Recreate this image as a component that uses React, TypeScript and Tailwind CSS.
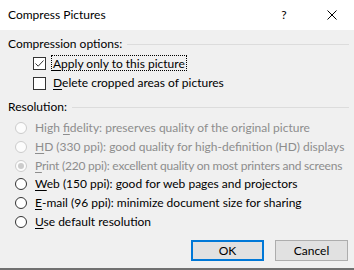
import React from 'react';

const font = { fontFamily: 'Lato, "Noto Sans", sans-serif' };

const Ul: React.FC<{ children: React.ReactNode }> = ({ children }) => (
  <span className="underline underline-offset-[2px] decoration-1">{children}</span>
);

const GroupHeader: React.FC<{ label: string; className?: string }> = ({ label, className = '' }) => (
  <div className={`flex items-center h-[16px] ${className}`}>
    <span className="text-black leading-[16px]">{label}</span>
    <div className="flex-1 ml-[5px] mr-[5px] h-px bg-[#dcdcdc]" />
  </div>
);

const Checkbox: React.FC<{ checked?: boolean }> = ({ checked }) => (
  <div className="w-[13px] h-[13px] border border-[#333333] bg-white flex items-center justify-center shrink-0">
    {checked && (
      <svg width="11" height="11" viewBox="0 0 11 11">
        <path d="M1.5 5.5 L4.2 8.2 L9.5 2.5" fill="none" stroke="#333333" strokeWidth="1" />
      </svg>
    )}
  </div>
);

const Radio: React.FC<{ disabled?: boolean; dot?: boolean }> = ({ disabled, dot }) => (
  <div
    className={`w-[12px] h-[12px] rounded-full border flex items-center justify-center shrink-0 ${
      disabled ? 'border-[#cccccc] bg-[#fcfcfc]' : 'border-[#333333] bg-white'
    }`}
  >
    {dot && <div className={`w-[6px] h-[6px] rounded-full ${disabled ? 'bg-[#cccccc]' : 'bg-[#333333]'}`} />}
  </div>
);

const resolutions: {
  key: string;
  rest: string;
  pre?: string;
  disabled?: boolean;
  dot?: boolean;
  tight?: boolean;
}[] = [
  { pre: 'High ', key: 'f', rest: 'idelity: preserves quality of the original picture', disabled: true },
  { key: 'H', rest: 'D (330 ppi): good quality for high-definition (HD) displays', disabled: true },
  { key: 'P', rest: 'rint (220 ppi): excellent quality on most printers and screens', disabled: true, dot: true, tight: true },
  { key: 'W', rest: 'eb (150 ppi): good for web pages and projectors' },
  { key: 'E', rest: '-mail (96 ppi): minimize document size for sharing' },
  { key: 'U', rest: 'se default resolution' },
];

export default function App() {
  return (
    <div className="w-[354px] h-[270px] bg-[#f0f0f0] flex flex-col text-[12px] text-black overflow-hidden" style={font}>
      {/* Title bar */}
      <div className="h-[30px] bg-white flex items-center pl-[8px] shrink-0">
        <span className="flex-1 leading-[16px]">Compress Pictures</span>
        <span className="w-[10px] text-center leading-[16px] mr-[38px]">?</span>
        <svg width="10" height="10" viewBox="0 0 10 10" className="mr-[17px]">
          <path d="M0.5 0.5 L9.5 9.5 M9.5 0.5 L0.5 9.5" stroke="#000" strokeWidth="1" />
        </svg>
      </div>

      <div className="flex flex-col pl-[8px] flex-1">
        <GroupHeader label="Compression options:" className="mt-[6px]" />
        <div className="flex items-center h-[20px] pl-[25px] mt-px">
          <Checkbox checked />
          <span className="ml-[5px] px-[1px] h-[16px] leading-[15px] border border-dotted border-black">
            <Ul>A</Ul>pply only to this picture
          </span>
        </div>
        <div className="flex items-center h-[20px] pl-[25px]">
          <Checkbox />
          <span className="ml-[7px] leading-[16px]">
            <Ul>D</Ul>elete cropped areas of pictures
          </span>
        </div>

        <GroupHeader label="Resolution:" className="mt-[6px]" />
        <div className="flex flex-col mt-[4px] pl-[7px]">
          {resolutions.map((r) => (
            <div key={r.rest} className="flex items-center h-[18.7px]">
              <Radio disabled={r.disabled} dot={r.dot} />
              <span
                className={`ml-[8px] leading-[16px] whitespace-nowrap ${r.tight ? 'tracking-[-0.22px]' : ''} ${
                  r.disabled ? 'text-[#8d8d8d]' : 'text-black'
                }`}
              >
                {r.pre}
                <Ul>{r.key}</Ul>
                {r.rest}
              </span>
            </div>
          ))}
        </div>

        <div className="flex justify-end gap-[11px] mt-[9px] pr-[6px]">
          <button className="w-[73px] h-[21px] border-2 border-[#0078d7] bg-[#e1e1e1] leading-[16px]">OK</button>
          <button className="w-[73px] h-[21px] border border-[#adadad] bg-[#e1e1e1] leading-[16px]">Cancel</button>
        </div>
      </div>

      <div className="h-[2px] bg-[#707070] shrink-0" />
    </div>
  );
}
